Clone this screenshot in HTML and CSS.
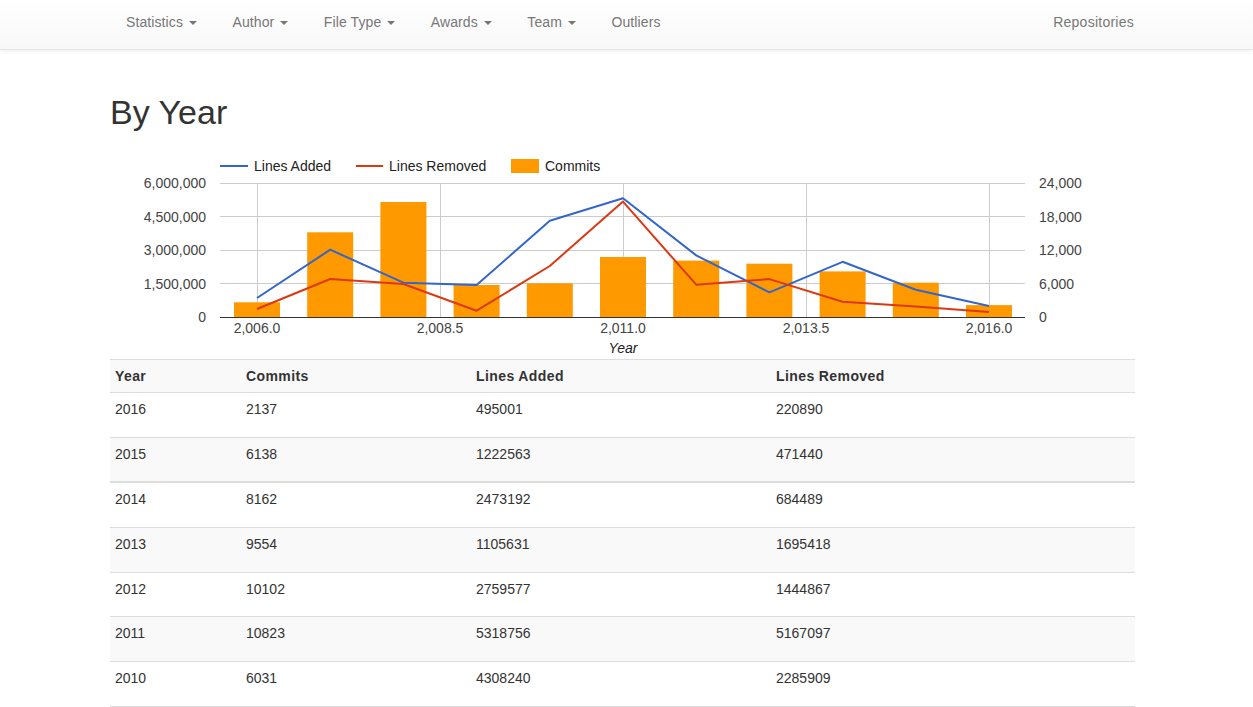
FILE: index.html
```html
<!DOCTYPE html>
<html>
<head>
<meta charset="utf-8">
<title>By Year</title>
<link rel="stylesheet" href="styles.css">
</head>
<body>
<nav class="navbar">
  <div class="nav-inner">
    <a class="nav-link">Statistics <span class="caret"></span></a>
    <a class="nav-link">Author <span class="caret"></span></a>
    <a class="nav-link">File Type <span class="caret"></span></a>
    <a class="nav-link">Awards <span class="caret"></span></a>
    <a class="nav-link">Team <span class="caret"></span></a>
    <a class="nav-link">Outliers</a>
    <a class="nav-link nav-right">Repositories</a>
  </div>
</nav>
<main class="container">
  <h1 class="title">By Year</h1>
  <svg class="chart" width="1025" height="227" viewBox="0 0 1025 227" xmlns="http://www.w3.org/2000/svg">
    <g transform="translate(-110,-132)" font-family="'Liberation Sans', Arial, sans-serif" font-size="14">
      <!-- legend -->
      <line x1="220" y1="166" x2="248" y2="166" stroke="#3366cc" stroke-width="2"/>
      <text x="254" y="171" fill="#222">Lines Added</text>
      <line x1="356" y1="166" x2="383" y2="166" stroke="#dc3912" stroke-width="2"/>
      <text x="389" y="171" fill="#222">Lines Removed</text>
      <rect x="511" y="159" width="28" height="14" fill="#ff9900"/>
      <text x="545" y="171" fill="#222">Commits</text>
      <!-- gridlines -->
      <g stroke="#cccccc" stroke-width="1">
        <line x1="220" y1="183.5" x2="1025" y2="183.5"/>
        <line x1="220" y1="216.5" x2="1025" y2="216.5"/>
        <line x1="220" y1="250.5" x2="1025" y2="250.5"/>
        <line x1="220" y1="283.5" x2="1025" y2="283.5"/>
        <line x1="257.5" y1="183" x2="257.5" y2="317"/>
        <line x1="440.5" y1="183" x2="440.5" y2="317"/>
        <line x1="623.5" y1="183" x2="623.5" y2="317"/>
        <line x1="806.5" y1="183" x2="806.5" y2="317"/>
        <line x1="989.5" y1="183" x2="989.5" y2="317"/>
      </g>
      <!-- bars -->
      <g fill="#ff9900">
        <rect x="234" y="302.3" width="46" height="14.7"/>
        <rect x="307.2" y="232.3" width="46" height="84.7"/>
        <rect x="380.4" y="202" width="46" height="115"/>
        <rect x="453.6" y="285" width="46" height="32"/>
        <rect x="526.8" y="283.3" width="46" height="33.7"/>
        <rect x="600" y="257" width="46" height="60"/>
        <rect x="673.2" y="260.6" width="46" height="56.4"/>
        <rect x="746.4" y="263.7" width="46" height="53.3"/>
        <rect x="819.6" y="271.4" width="46" height="45.6"/>
        <rect x="892.8" y="282.7" width="46" height="34.3"/>
        <rect x="966" y="305.1" width="46" height="11.9"/>
      </g>
      <!-- baseline -->
      <line x1="220" y1="317.5" x2="1025" y2="317.5" stroke="#333" stroke-width="1"/>
      <!-- lines -->
      <polyline fill="none" stroke="#3366cc" stroke-width="2" stroke-linejoin="round"
        points="257,298 330.2,249.7 403.4,282.7 476.6,285 549.8,220.8 623,198.2 696.2,255.4 769.4,292.3 842.6,261.8 915.8,289.7 989,305.9"/>
      <polyline fill="none" stroke="#dc3912" stroke-width="2" stroke-linejoin="round"
        points="257,309 330.2,279 403.4,284 476.6,310.7 549.8,266 623,201.6 696.2,284.7 769.4,279.1 842.6,301.7 915.8,306.5 989,312.1"/>
      <!-- left axis -->
      <g fill="#444" text-anchor="end">
        <text x="206" y="188">6,000,000</text>
        <text x="206" y="222">4,500,000</text>
        <text x="206" y="255">3,000,000</text>
        <text x="206" y="289">1,500,000</text>
        <text x="206" y="322">0</text>
      </g>
      <!-- right axis -->
      <g fill="#444" text-anchor="start">
        <text x="1039" y="188">24,000</text>
        <text x="1039" y="222">18,000</text>
        <text x="1039" y="255">12,000</text>
        <text x="1039" y="289">6,000</text>
        <text x="1039" y="322">0</text>
      </g>
      <!-- x axis -->
      <g fill="#444" text-anchor="middle">
        <text x="257" y="333">2,006.0</text>
        <text x="440" y="333">2,008.5</text>
        <text x="623" y="333">2,011.0</text>
        <text x="806" y="333">2,013.5</text>
        <text x="989" y="333">2,016.0</text>
      </g>
      <text x="623" y="353" text-anchor="middle" fill="#222" font-style="italic">Year</text>
    </g>
  </svg>
  <table class="data-table">
    <colgroup>
      <col class="c-year"><col class="c-commits"><col class="c-added"><col class="c-removed">
    </colgroup>
    <tr class="head-row striped"><th>Year</th><th>Commits</th><th>Lines Added</th><th>Lines Removed</th></tr>
    <tr><td>2016</td><td>2137</td><td>495001</td><td>220890</td></tr>
    <tr class="striped thick"><td>2015</td><td>6138</td><td>1222563</td><td>471440</td></tr>
    <tr><td>2014</td><td>8162</td><td>2473192</td><td>684489</td></tr>
    <tr class="striped"><td>2013</td><td>9554</td><td>1105631</td><td>1695418</td></tr>
    <tr><td>2012</td><td>10102</td><td>2759577</td><td>1444867</td></tr>
    <tr class="striped"><td>2011</td><td>10823</td><td>5318756</td><td>5167097</td></tr>
    <tr><td>2010</td><td>6031</td><td>4308240</td><td>2285909</td></tr>
  </table>
</main>
</body>
</html>
```

FILE: styles.css
```css
html, body {
  margin: 0;
  padding: 0;
  background: #fff;
}
body {
  font-family: "Liberation Sans", Arial, Helvetica, sans-serif;
  font-size: 14px;
  line-height: 20px;
  color: #333;
}
.navbar {
  height: 50px;
  background: linear-gradient(to bottom, #ffffff 0%, #f8f8f8 100%);
  border-bottom: 1px solid #e7e7e7;
  box-shadow: inset 0 1px 0 rgba(255,255,255,.15), 0 1px 5px rgba(0,0,0,.075);
  box-sizing: border-box;
}
.nav-inner {
  display: flex;
  gap: 5.5px;
  padding: 0 104px 0 111px;
  height: 49px;
}
.nav-link {
  display: block;
  padding: 12px 15px 17px;
  line-height: 20px;
  color: #777;
  text-decoration: none;
  white-space: nowrap;
  letter-spacing: 0.1px;
}
.nav-right {
  margin-left: auto;
  letter-spacing: 0.25px;
}
.caret {
  display: inline-block;
  width: 0;
  height: 0;
  margin-left: 2px;
  vertical-align: middle;
  border-top: 4px solid #777;
  border-left: 4px solid transparent;
  border-right: 4px solid transparent;
}
.container {
  margin-left: 110px;
  width: 1025px;
}
.title {
  margin: 42px 0 0;
  font-size: 34px;
  line-height: 40px;
  font-weight: 500;
  color: #333;
}
.chart {
  display: block;
}
.data-table {
  width: 1025px;
  table-layout: fixed;
  border-collapse: collapse;
  border-top: 1px solid #ddd;
}
.c-year { width: 131px; }
.c-commits { width: 230px; }
.c-added { width: 300px; }
.c-removed { width: 364px; }
.data-table tr {
  border-bottom: 1px solid #ddd;
}
.data-table tr.thick {
  border-bottom: 2px solid #ddd;
}
.data-table tr.striped {
  background: #f9f9f9;
}
.data-table th {
  text-align: left;
  font-weight: bold;
  padding: 6px 5px;
  vertical-align: top;
  letter-spacing: 0.4px;
}
.data-table td {
  padding: 6px 5px 17.7px;
  vertical-align: top;
}
```
